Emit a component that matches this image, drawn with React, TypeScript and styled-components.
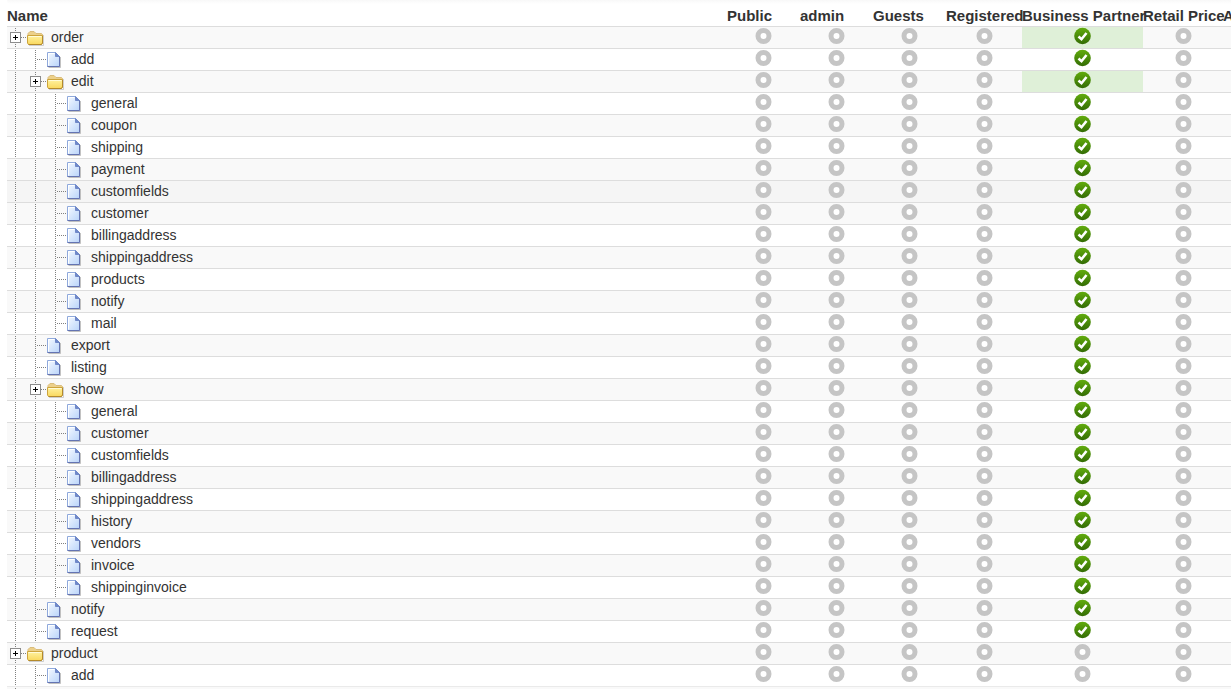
import React from "react";
import styled, { createGlobalStyle } from "styled-components";

const GlobalStyle = createGlobalStyle`
  body {
    margin: 0;
    background: #fff;
    color: #333;
    font-family: "Liberation Sans", Arial, sans-serif;
  }
`;

const Panel = styled.main`
  padding: 0 0 0 7px;
  overflow: hidden;
  height: 100vh;
  box-sizing: border-box;
`;

const TopEdge = styled.div`
  height: 4px;
  border-radius: 0 0 0 4px;
  background: linear-gradient(#f8f8f8, #fff);
`;

const PermissionTable = styled.table`
  width: 100%;
  table-layout: fixed;
  border-collapse: separate;
  border-spacing: 0;
`;

const Column = styled.col<{ $width?: number }>`
  width: ${({ $width }) => ($width ? `${$width}px` : "auto")};
`;

const HeadCell = styled.th`
  height: 22px;
  padding: 2px 0 0;
  box-sizing: border-box;
  font-size: 15px;
  line-height: 20px;
  font-weight: bold;
  text-align: left;
  white-space: nowrap;
`;

const Row = styled.tr<{ $active?: boolean; $faint?: boolean }>`
  --line: ${({ $faint }) => ($faint ? "#eaeaea" : "#ddd")};
  background: #fff;
  &:nth-child(odd) {
    background: ${({ $active }) => ($active ? "#f5f5f5" : "#f9f9f9")};
  }
  &:nth-child(even) {
    background: ${({ $active }) => ($active ? "#f5f5f5" : "#fff")};
  }
  &:hover {
    background: #f5f5f5;
  }
`;

const NameCell = styled.th`
  height: 21px;
  padding: 0;
  border-top: 1px solid var(--line);
  font-weight: normal;
  text-align: left;
`;

const StateCell = styled.td<{ $granted?: boolean }>`
  height: 21px;
  padding: 0;
  border-top: 1px solid var(--line);
  text-align: center;
  background: ${({ $granted }) => ($granted ? "#dff0d8" : "transparent")};
`;

const NameLine = styled.div`
  display: flex;
  align-items: flex-start;
  height: 21px;
`;

const Label = styled.span`
  padding-left: 6px;
  font-size: 14px;
  line-height: 20px;
`;

const Drawing = styled.svg`
  display: block;
  flex: none;
`;

const StateButton = styled.button`
  display: block;
  width: 17px;
  height: 21px;
  margin: 0 auto;
  padding: 0;
  border: 0;
  background: none;
  cursor: pointer;
`;

const ToggleButton = styled.button`
  display: block;
  flex: none;
  padding: 0;
  border: 0;
  background: none;
  cursor: pointer;
`;

const Guide = () => (
  <Drawing width="20" height="21" aria-hidden="true">
    <path d="M8.5 1V20" stroke="#808080" strokeDasharray="1 1" />
  </Drawing>
);

const Elbow = () => (
  <Drawing width="20" height="21" aria-hidden="true">
    <path d="M8.5 1V20M10 10.5H20" stroke="#808080" strokeDasharray="1 1" />
  </Drawing>
);

const Expander = ({ name }: { name: string }) => (
  <ToggleButton type="button" aria-label={`Expand ${name}`}>
    <Drawing width="20" height="21">
      <path d="M8.5 1V20M14 10.5H20" stroke="#808080" strokeDasharray="1 1" />
      <rect x="3.5" y="5.500" width="10" height="10" fill="#fff" stroke="#8c8c8c" />
      <path d="M6 10.500H11M8.500 8V13" stroke="#000" />
    </Drawing>
  </ToggleButton>
);

const Folder = () => (
  <Drawing width="18" height="21" viewBox="0 0 18 21" aria-hidden="true">
    <path d="M2 18.500H16.500V8" stroke="#b0b0b0" fill="none" opacity=".6" />
    <path d="M1 9V6.500L3 4.500H7L9 6.500H14.500L15.500 7.500V9Z" fill="#ecd08a" stroke="#d9bc7c" />
    <path d="M.5 8.500H15.500V16L14.500 17.500H1.500L.5 16Z" fill="url(#folderFace)" stroke="#cda43c" />
    <path d="M1.500 17.500H14.500L15.500 16V9" stroke="#b48a2c" fill="none" />
    <path d="M1.500 9.500H14.500" stroke="#fffbd8" />
  </Drawing>
);

const FileIcon = () => (
  <Drawing width="18" height="21" viewBox="0 0 18 21" aria-hidden="true">
    <path d="M1.500 18.500H13.500V8" stroke="#999" fill="none" opacity=".6" />
    <path d="M.5 3.500H8.500L12.500 7.500V17.500H.5Z" fill="url(#fileFace)" stroke="#8fa9dc" />
    <path d="M1.500 16.500V4.500H7.500" fill="none" stroke="#fff" />
    <path d="M12.500 7V17.500H.5" fill="none" stroke="#6474b2" />
    <path d="M8.500 3.500V7.500H12.500Z" fill="#7089c9" stroke="#7089c9" />
  </Drawing>
);

const StateIcon = ({ on }: { on: boolean }) => (
  <Drawing width="17" height="21" viewBox="0 0 17 21" aria-hidden="true">
    {on ? (
      <>
        <circle cx="8.500" cy="9" r="8.300" fill="url(#granted)" />
        <path d="M4.500 9.500L7.500 12.200L12.500 6" fill="none" stroke="#fff" strokeWidth="2.600" />
      </>
    ) : (
      <circle cx="8.500" cy="9" r="5.500" fill="#fff" stroke="#c5c5c5" strokeWidth="5" />
    )}
  </Drawing>
);

const SharedPaint = () => (
  <Drawing width="0" height="0" aria-hidden="true">
    <defs>
      <linearGradient id="folderFace" x2="0" y2="1">
        <stop stopColor="#fff2a0" />
        <stop offset="1" stopColor="#f9d85e" />
      </linearGradient>
      <linearGradient id="fileFace" x2="1" y2="1">
        <stop stopColor="#f6faff" />
        <stop offset="1" stopColor="#b9d4fa" />
      </linearGradient>
      <linearGradient id="granted" x2="0" y2="1">
        <stop stopColor="#62ac0d" />
        <stop offset="1" stopColor="#336c05" />
      </linearGradient>
    </defs>
  </Drawing>
);

type Item = { name: string; depth: number; folder?: boolean; denied?: boolean; active?: boolean };

const leaves = (depth: number, names: string[]): Item[] => names.map((name) => ({ name, depth }));

const items: Item[] = [
  { name: "order", depth: 0, folder: true },
  { name: "add", depth: 1 },
  { name: "edit", depth: 1, folder: true },
  ...leaves(2, ["general", "coupon", "shipping", "payment"]),
  { name: "customfields", depth: 2, active: true },
  ...leaves(2, ["customer", "billingaddress", "shippingaddress", "products", "notify", "mail"]),
  ...leaves(1, ["export", "listing"]),
  { name: "show", depth: 1, folder: true },
  ...leaves(2, [
    "general",
    "customer",
    "customfields",
    "billingaddress",
    "shippingaddress",
    "history",
    "vendors",
    "invoice",
    "shippinginvoice",
  ]),
  ...leaves(1, ["notify", "request"]),
  { name: "product", depth: 0, folder: true, denied: true },
  { name: "add", depth: 1, denied: true },
];

const groups = [
  { name: "Public", width: 73 },
  { name: "admin", width: 73 },
  { name: "Guests", width: 73 },
  { name: "Registered", width: 76 },
  { name: "Business Partner", width: 121 },
  { name: "Retail Price", width: 80 },
];

export default function App() {
  return (
    <Panel>
      <GlobalStyle />
      <SharedPaint />
      <TopEdge />
      <PermissionTable>
        <colgroup>
          <Column />
          {groups.map((g) => (
            <Column key={g.name} $width={g.width} />
          ))}
          <Column $width={8} />
        </colgroup>
        <thead>
          <tr>
            <HeadCell scope="col">Name</HeadCell>
            {groups.map((g) => (
              <HeadCell key={g.name} scope="col">
                {g.name}
              </HeadCell>
            ))}
            <HeadCell scope="col">A</HeadCell>
          </tr>
        </thead>
        <tbody>
          {items.map((item, i) => (
            <Row key={i} $active={item.active}>
              <NameCell scope="row">
                <NameLine>
                  {Array.from({ length: item.depth }, (_, d) => (
                    <Guide key={d} />
                  ))}
                  {item.folder ? <Expander name={item.name} /> : <Elbow />}
                  {item.folder ? <Folder /> : <FileIcon />}
                  <Label>{item.name}</Label>
                </NameLine>
              </NameCell>
              {groups.map((g) => {
                const on = g.name === "Business Partner" && !item.denied;
                return (
                  <StateCell key={g.name} $granted={on && (item.name === "order" || item.name === "edit")}>
                    <StateButton type="button" aria-pressed={on} aria-label={`${g.name}: ${item.name}`}>
                      <StateIcon on={on} />
                    </StateButton>
                  </StateCell>
                );
              })}
              <StateCell />
            </Row>
          ))}
          <Row $faint aria-hidden="true">
            <NameCell as="td">
              <NameLine>
                <Guide />
                <Guide />
              </NameLine>
            </NameCell>
            {groups.map((g) => (
              <StateCell key={g.name} />
            ))}
            <StateCell />
          </Row>
        </tbody>
      </PermissionTable>
    </Panel>
  );
}
